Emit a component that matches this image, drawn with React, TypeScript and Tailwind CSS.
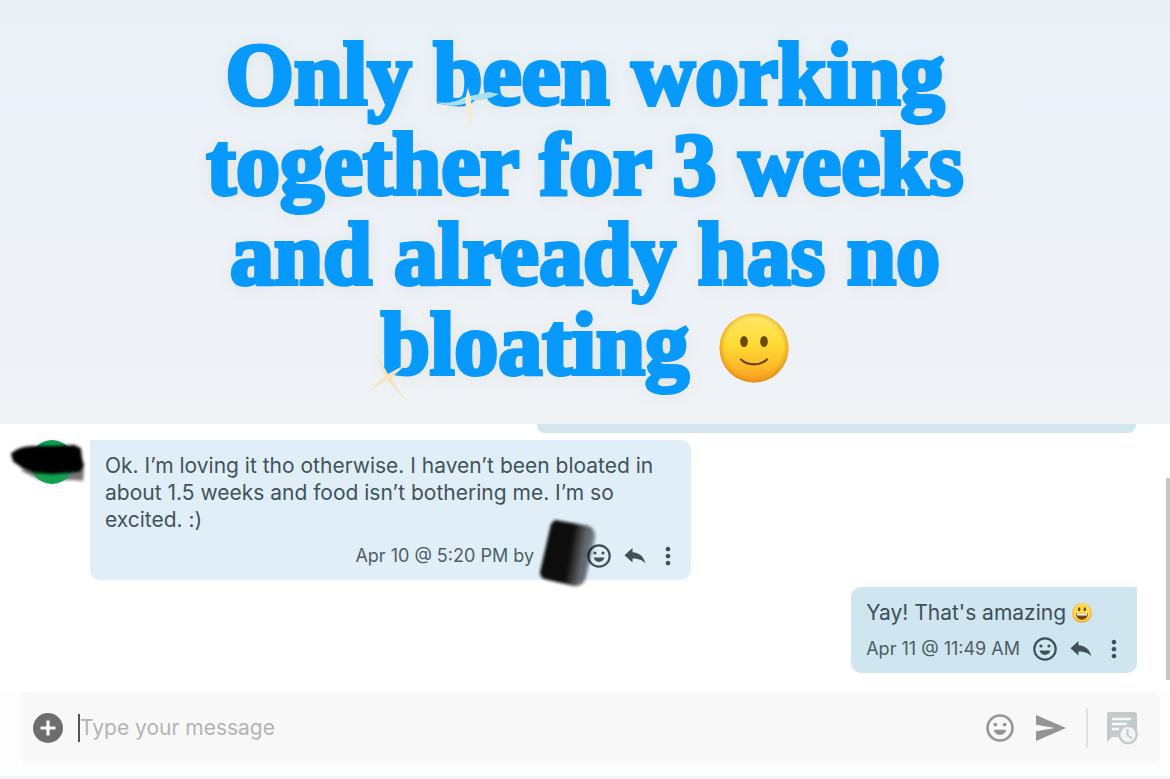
import { useState } from "react";
import type { ReactNode } from "react";
import { MdMoreVert } from "react-icons/md";

function SmileIcon({ className }: { className?: string }) {
  return (
    <svg viewBox="0 0 24 24" className={className} fill="none" aria-hidden="true">
      <circle cx="12" cy="12" r="10.7" stroke="currentColor" strokeWidth="2.2" />
      <circle cx="8" cy="9" r="1.6" fill="currentColor" />
      <circle cx="16" cy="9" r="1.6" fill="currentColor" />
      <path d="M6.5 13.6h11c-.7 2.7-2.8 4.4-5.5 4.4s-4.8-1.7-5.500-4.400z" fill="currentColor" />
    </svg>
  );
}

function ReplyIcon({ className }: { className?: string }) {
  return (
    <svg viewBox="0 0 22 18" className={className} fill="currentColor" aria-hidden="true">
      <path d="M8.500 1v4.200C15 5.600 19.600 9.200 21.500 16.500c-3-3.600-7.200-5-13-5v4.100L.5 8.300z" />
    </svg>
  );
}

function PlusCircleIcon({ className }: { className?: string }) {
  return (
    <svg viewBox="0 0 30 30" className={className} aria-hidden="true">
      <circle cx="15" cy="15" r="15" fill="#6e6e6e" />
      <path d="M15 7.500v15M7.500 15h15" stroke="#f8f8f8" strokeWidth="3.200" />
    </svg>
  );
}

function SendIcon({ className }: { className?: string }) {
  return (
    <svg viewBox="0 0 30 28" className={className} fill="currentColor" aria-hidden="true">
      <path d="M0 1l30 13L0 27V17.200L19 14 0 10.800z" />
    </svg>
  );
}

function ScheduleIcon({ className }: { className?: string }) {
  return (
    <svg viewBox="0 0 32 34" className={className} fill="none" aria-hidden="true">
      <path d="M3 1h25a3 3 0 0 1 3 3v22H6l-5 5V3a2 2 0 0 1 2-2z" fill="#c3caca" />
      <path d="M6 8h19M6 13h15M6 18h7" stroke="#f8f8f8" strokeWidth="2.400" />
      <circle cx="22" cy="23.500" r="8.700" fill="#f4f6f6" stroke="#c3caca" strokeWidth="2.400" />
      <path d="M21.500 18v6l4.500 3.500" stroke="#c3caca" strokeWidth="2.200" />
    </svg>
  );
}

function SlightSmileEmoji({ className }: { className?: string }) {
  return (
    <svg viewBox="0 0 70 70" className={className} role="img" aria-label="slightly smiling face">
      <defs>
        <linearGradient id="face" x1="0" y1="0" x2="0" y2="1">
          <stop offset="0" stopColor="#ffe56a" />
          <stop offset=".45" stopColor="#ffdc35" />
          <stop offset=".75" stopColor="#fdbd2a" />
          <stop offset="1" stopColor="#f79a20" />
        </linearGradient>
        <radialGradient id="rim" cx=".5" cy=".48" r=".52">
          <stop offset=".8" stopColor="#f2a51f" stopOpacity="0" />
          <stop offset="1" stopColor="#e08a14" stopOpacity=".9" />
        </radialGradient>
      </defs>
      <circle cx="35" cy="35" r="34.500" fill="url(#face)" />
      <circle cx="35" cy="35" r="34.500" fill="url(#rim)" />
      <ellipse cx="25" cy="28.500" rx="3.800" ry="5.600" fill="#6b4a10" />
      <ellipse cx="45" cy="28.500" rx="3.800" ry="5.600" fill="#6b4a10" />
      <path d="M22 46.500c7 6.500 19 6.500 26 0" fill="none" stroke="#6b4210" strokeWidth="2.300" strokeLinecap="round" />
    </svg>
  );
}

function GrinEmoji({ className }: { className?: string }) {
  return (
    <svg viewBox="0 0 20 20" className={className} role="img" aria-label="grinning face">
      <circle cx="10" cy="10" r="9.800" fill="#f0a929" />
      <circle cx="10" cy="9.300" r="9" fill="#ffd94a" />
      <ellipse cx="7.200" cy="6.300" rx="1.100" ry="2" fill="#6b4210" />
      <ellipse cx="12.800" cy="6.300" rx="1.100" ry="2" fill="#6b4210" />
      <path d="M4 10.500h12c0 3.600-2.600 6.300-6 6.300s-6-2.700-6-6.300z" fill="#7a4514" />
      <path d="M4.600 10.500h10.800l-.6 2H5.200z" fill="#fff" />
    </svg>
  );
}

function MessageActions() {
  return (
    <span className="flex items-center text-[#3f5059]">
      <button type="button" aria-label="Add reaction">
        <SmileIcon className="size-6" />
      </button>
      <button type="button" aria-label="Reply" className="ml-[13px]">
        <ReplyIcon className="h-[18px] w-[22px]" />
      </button>
      <button type="button" aria-label="More options" className="ml-2">
        <MdMoreVert className="size-7" />
      </button>
    </span>
  );
}

function Meta({ children }: { children: ReactNode }) {
  return <span className="text-lg leading-6 text-[#4e5e67]">{children}</span>;
}

function Banner() {
  return (
    <header className="flex h-[424px] flex-col items-center bg-linear-to-b from-[#e9f1f7] via-[#edf1f8] to-[#eff3f6] pt-[30px]">
      <h1 className="text-center font-['Liberation_Serif',serif] text-[88px] leading-[90px] font-bold whitespace-nowrap text-[#0799fb] [-webkit-text-stroke:4px_#0799fb] [text-shadow:0_2px_16px_#dcdfd8]">
        Only{" "}
        <span className="relative">
          been
          <svg viewBox="0 0 70 50" className="absolute top-[52px] left-0 h-[50px] w-[70px]" aria-hidden="true">
            <path d="M4 24q14 3 28-5l24-5 10 2q-13 7-26 6l-6 3q-16 6-30-1z" fill="#a9dff0" />
            <path d="M35 10l3 11 1 26h-3l-4-25z" fill="#f7ecd0" />
          </svg>
        </span>{" "}
        working
        <br />
        together for 3 weeks
        <br />
        and already has no
        <br />
        <span className="relative">
          bloating
          <svg viewBox="0 0 50 60" className="absolute top-[50px] -left-[15px] h-[60px] w-[50px]" aria-hidden="true">
            <path d="M8 4l14 24 20-11-17 15 15 23-19-21L2 46l17-16z" fill="#f5e4bb" />
          </svg>
        </span>{" "}
        <SlightSmileEmoji className="ml-2 inline-block size-[70px] align-[-9px]" />
      </h1>
    </header>
  );
}

function Avatar() {
  return (
    <div className="relative h-11 w-[76px] shrink-0">
      <svg viewBox="0 0 76 44" className="size-full overflow-visible" aria-hidden="true">
        <defs>
          <filter id="soft" x="-20%" y="-20%" width="140%" height="140%">
            <feGaussianBlur stdDeviation="1.800" />
          </filter>
        </defs>
        <path d="M10 30l20 10h34l9 1 1-12-8-6z" fill="#777" filter="url(#soft)" />
        <circle cx="42" cy="22" r="22" fill="#12a152" />
        <path
          d="M2 14q6-6 20-7l20 0 22-1 6 3 1 9 2 8-4 5-13 1-14 1-16-1-12-4-10-7z"
          fill="#000"
          stroke="#000"
          strokeWidth="2"
          strokeLinejoin="round"
          filter="url(#soft)"
        />
      </svg>
    </div>
  );
}

function HiddenName() {
  return (
    <span className="relative mr-3 ml-1.5 w-[35px]">
      <svg viewBox="0 0 58 70" className="absolute -top-[38px] left-0 h-[70px] w-[58px] overflow-visible" aria-hidden="true">
        <defs>
          <linearGradient id="smudge" x1="0" y1="0" x2="1" y2=".2">
            <stop offset=".6" stopColor="#0b0b0d" />
            <stop offset="1" stopColor="#0b0b0d" stopOpacity=".4" />
          </linearGradient>
        </defs>
        <path
          d="M15 2l34 6q8 4 6 13l-9 39q-3 9-12 8L4 61q-4-2-4-7L11 6z"
          fill="url(#smudge)"
          filter="url(#soft)"
        />
      </svg>
    </span>
  );
}

function Composer() {
  const [message, setMessage] = useState("");

  return (
    <form
      className="mr-2.5 ml-5 flex h-[72px] items-center rounded-lg bg-[#f8f8f8] pr-[22px] pl-[13px]"
      onSubmit={(e) => e.preventDefault()}
    >
      <button type="button" aria-label="Add attachment">
        <PlusCircleIcon className="size-[30px]" />
      </button>
      <span className="ml-[15px] h-7 w-0.5 bg-[#555]" />
      <input
        type="text"
        aria-label="Message"
        placeholder="Type your message"
        value={message}
        onChange={(e) => setMessage(e.target.value)}
        className="min-w-0 flex-1 bg-transparent text-[21px] leading-7 text-[#444] outline-none placeholder:text-[#b4b4b4]"
      />
      <button type="button" aria-label="Insert emoji" className="text-[#949494]">
        <SmileIcon className="size-7" />
      </button>
      <button type="submit" aria-label="Send" className="ml-[22px] text-[#949494]">
        <SendIcon className="h-7 w-[30px]" />
      </button>
      <span className="ml-5 h-10 w-0.5 bg-[#e0e0e0]" />
      <button type="button" aria-label="Schedule message" className="ml-[18px]">
        <ScheduleIcon className="h-[34px] w-8" />
      </button>
    </form>
  );
}

export default function App() {
  return (
    <div className="flex min-h-screen flex-col bg-white font-['Inter',sans-serif]">
      <Banner />

      <main className="relative flex flex-1 flex-col">
        <div className="mr-[34px] h-[9px] w-[599px] self-end rounded-b-lg bg-[#d3e6ef]" />

        <div className="mt-[7px] flex items-start pl-2.5">
          <Avatar />
          <article className="ml-1 w-[601px] rounded-[10px] rounded-tl-none bg-[#e0eff7] px-[15px] pt-3 pb-2.5">
            <p className="text-[21px] leading-[27px] text-[#43525a]">
              Ok. I’m loving it tho otherwise. I haven’t been bloated in about 1.5 weeks and food isn’t bothering me.
              I’m so excited. :)
            </p>
            <div className="mt-[9px] -mr-1.5 flex items-center justify-end">
              <Meta>Apr 10 @ 5:20 PM by</Meta>
              <HiddenName />
              <MessageActions />
            </div>
          </article>
        </div>

        <article className="mt-[7px] mr-[33px] self-end rounded-[10px] rounded-tr-none bg-[#cfe5ef] pt-3 pr-[9px] pb-2.5 pl-[15px]">
          <p className="flex items-center gap-1.5 text-[21px] leading-[27px] text-[#3f4f58]">
            Yay! That's amazing
            <GrinEmoji className="size-5" />
          </p>
          <div className="mt-[9px] flex items-center gap-[13px]">
            <Meta>Apr 11 @ 11:49 AM</Meta>
            <MessageActions />
          </div>
        </article>

        <div className="absolute top-[54px] right-0 h-[202px] w-1 bg-[#c5c5c5]" />
      </main>

      <footer className="bg-[#fdfdfe] pb-3">
        <Composer />
      </footer>
      <div className="h-[3px] bg-[#f3f5f8]" />
    </div>
  );
}
